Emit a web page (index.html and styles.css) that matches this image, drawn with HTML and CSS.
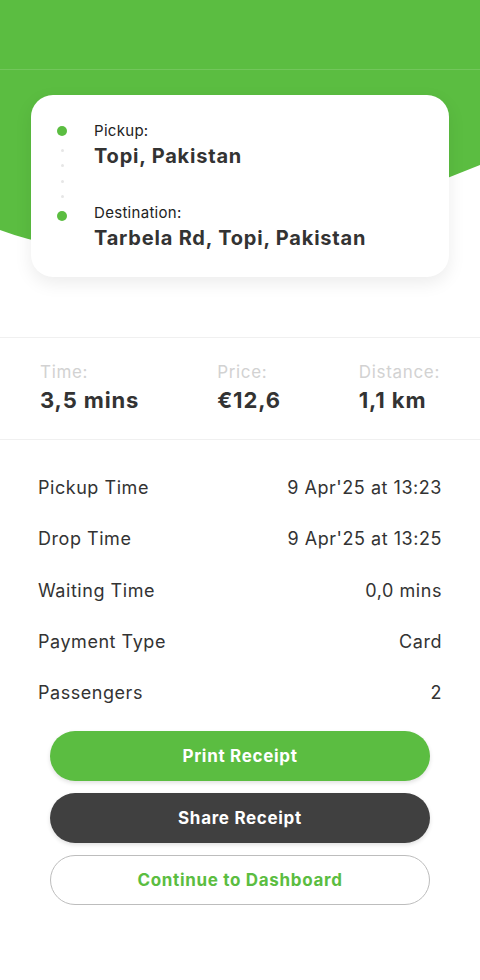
FILE: index.html
```html
<!DOCTYPE html>
<html lang="en">
<head>
<meta charset="utf-8">
<title>Trip Receipt</title>
<link rel="stylesheet" href="styles.css">
</head>
<body>
<div class="screen">
  <section class="hero">
    <svg class="hero-bg" width="480" height="260" viewBox="0 0 480 260" preserveAspectRatio="none" aria-hidden="true">
      <path d="M0 0 H480 V165 Q167 293 0 230 Z" fill="#5bbd41"/>
    </svg>
    <div class="appbar"></div>
    <div class="route-card">
      <div class="route-track">
        <span class="dot"></span>
        <span class="pip"></span>
        <span class="pip"></span>
        <span class="pip"></span>
        <span class="pip"></span>
        <span class="dot"></span>
      </div>
      <div class="route-stops">
        <div class="stop">
          <div class="stop-label">Pickup:</div>
          <div class="stop-place">Topi, Pakistan</div>
        </div>
        <div class="stop">
          <div class="stop-label">Destination:</div>
          <div class="stop-place">Tarbela Rd, Topi, Pakistan</div>
        </div>
      </div>
    </div>
  </section>

  <section class="stats">
    <div class="stat">
      <div class="stat-label">Time:</div>
      <div class="stat-value">3,5 mins</div>
    </div>
    <div class="stat">
      <div class="stat-label">Price:</div>
      <div class="stat-value">€12,6</div>
    </div>
    <div class="stat">
      <div class="stat-label">Distance:</div>
      <div class="stat-value">1,1 km</div>
    </div>
  </section>

  <section class="details">
    <div class="row"><span>Pickup Time</span><span>9 Apr'25 at 13:23</span></div>
    <div class="row"><span>Drop Time</span><span>9 Apr'25 at 13:25</span></div>
    <div class="row"><span>Waiting Time</span><span>0,0 mins</span></div>
    <div class="row"><span>Payment Type</span><span>Card</span></div>
    <div class="row"><span>Passengers</span><span>2</span></div>
  </section>

  <section class="actions">
    <button class="btn btn-primary">Print Receipt</button>
    <button class="btn btn-dark">Share Receipt</button>
    <button class="btn btn-outline">Continue to Dashboard</button>
  </section>
</div>
</body>
</html>
```

FILE: styles.css
```css
* { box-sizing: border-box; }

html, body {
  margin: 0;
  padding: 0;
  background: #ffffff;
}

body {
  font-family: "Inter", "Noto Sans", "DejaVu Sans", sans-serif;
  color: #333333;
}

.screen {
  width: 480px;
  min-height: 980px;
  background: #ffffff;
}

.hero {
  position: relative;
}

.hero-bg {
  position: absolute;
  left: 0;
  top: 0;
  display: block;
  z-index: 0;
}

.appbar {
  position: relative;
  height: 70px;
  border-bottom: 1px solid rgba(255, 255, 255, 0.14);
}

.route-card {
  position: relative;
  z-index: 1;
  margin: 25px 31px 0 31px;
  height: 182px;
  background: #ffffff;
  border-radius: 22px;
  box-shadow: 0 6px 18px rgba(0, 0, 0, 0.08);
  padding: 26px 26px;
  display: flex;
  gap: 27px;
}

.route-track {
  width: 10px;
  padding-top: 5px;
  display: flex;
  flex-direction: column;
  align-items: center;
  gap: 12.5px;
}

.dot {
  width: 10px;
  height: 10px;
  border-radius: 50%;
  background: #5bbd41;
}

.pip {
  width: 3px;
  height: 3px;
  border-radius: 50%;
  background: #e6e6e6;
}

.route-stops {
  display: flex;
  flex-direction: column;
  gap: 34px;
}

.stop-label {
  font-size: 15px;
  line-height: 20px;
  letter-spacing: 0.02em;
  color: #222222;
}

.stop-place {
  margin-top: 2px;
  font-size: 20px;
  line-height: 26px;
  font-weight: 700;
  letter-spacing: 0.04em;
  color: #333333;
}

.stats {
  margin-top: 60px;
  border-top: 1px solid #f0f0f0;
  border-bottom: 1px solid #f0f0f0;
  padding: 23px 40px 25px 40px;
  display: flex;
  justify-content: space-between;
}

.stat-label {
  font-size: 17px;
  line-height: 22px;
  letter-spacing: 0.04em;
  color: #d2d2d2;
}

.stat-value {
  margin-top: 3px;
  font-size: 22px;
  line-height: 28px;
  font-weight: 700;
  letter-spacing: 0.04em;
  color: #333333;
}

.details {
  padding: 35px 38px 0 38px;
  display: flex;
  flex-direction: column;
  gap: 25.3px;
}

.row {
  display: flex;
  justify-content: space-between;
  font-size: 18px;
  line-height: 26px;
  letter-spacing: 0.03em;
  color: #333333;
}

.actions {
  padding: 25px 50px 0 50px;
  display: flex;
  flex-direction: column;
  gap: 12px;
}

.btn {
  height: 50px;
  border-radius: 25px;
  border: none;
  font-family: inherit;
  font-size: 17px;
  font-weight: 700;
  letter-spacing: 0.04em;
  cursor: pointer;
}

.btn-primary {
  background: #5bbd41;
  color: #ffffff;
  box-shadow: 0 2px 4px rgba(0, 0, 0, 0.12);
}

.btn-dark {
  background: #404040;
  color: #ffffff;
  box-shadow: 0 2px 4px rgba(0, 0, 0, 0.12);
}

.btn-outline {
  background: #ffffff;
  color: #5bbd41;
  border: 1px solid #bdbdbd;
}
```
